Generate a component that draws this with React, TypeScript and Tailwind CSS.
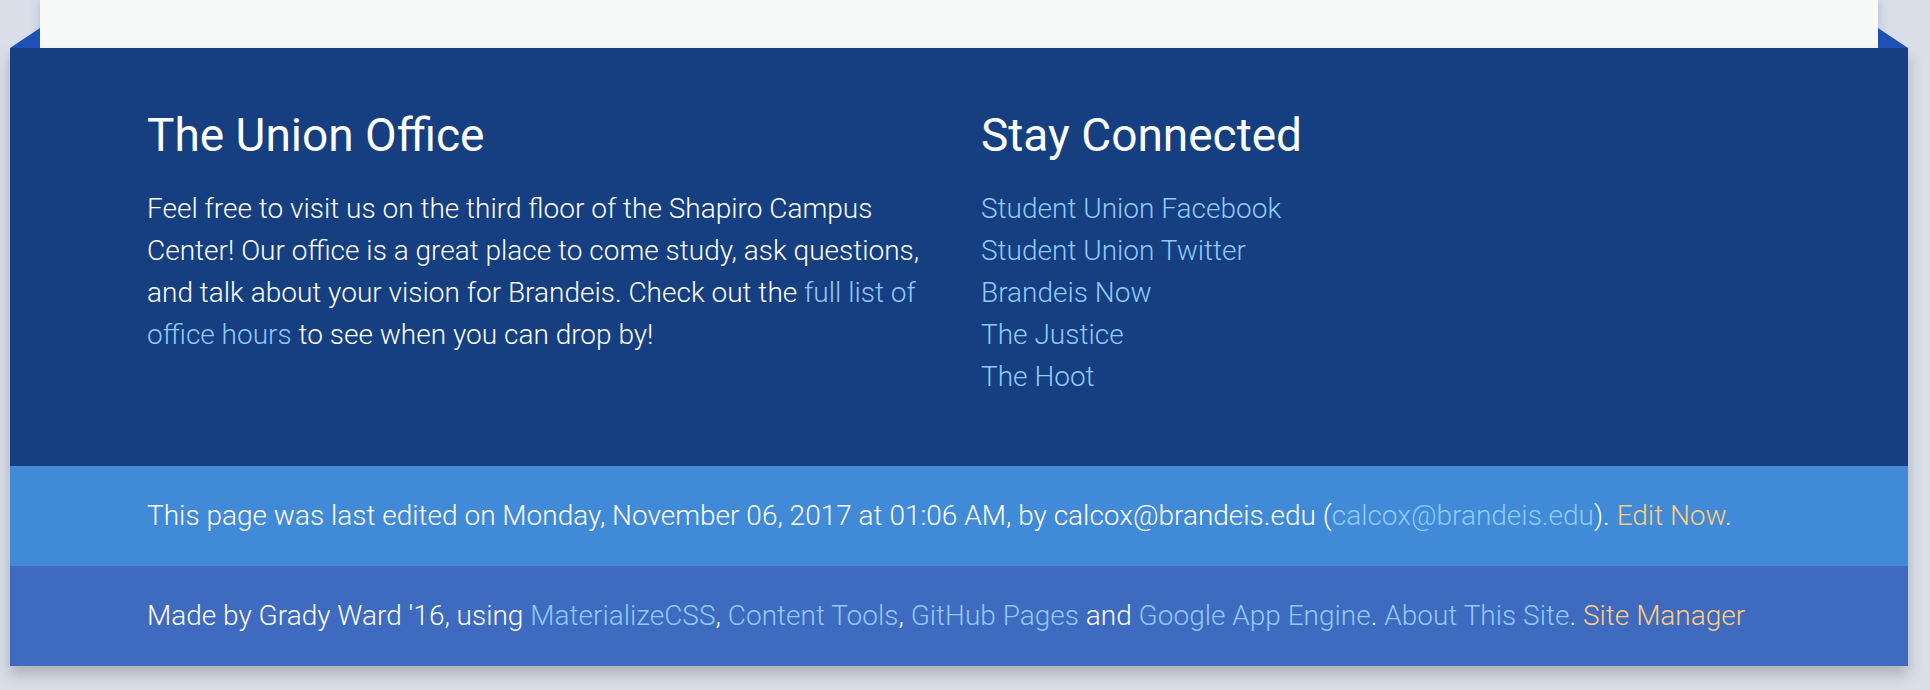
import React from "react";

const Link = ({ children }: { children: React.ReactNode }) => (
  <a className="text-[#90caf9] no-underline">{children}</a>
);
const Orange = ({ children }: { children: React.ReactNode }) => (
  <a className="text-[#ffcc80] no-underline">{children}</a>
);

export default function App() {
  return (
    <div
      className="w-[1930px] h-[690px] overflow-hidden bg-[#d9dee9]"
      style={{ fontFamily: "Roboto, 'Noto Sans', sans-serif" }}
    >
      <div className="ml-[40px] w-[1838px] h-[48px] bg-[#f7f8f8] shadow-[0_0_10px_rgba(0,0,0,0.18)]" />
      <footer className="relative ml-[10px] w-[1898px] shadow-[0_8px_14px_rgba(0,0,0,0.22)]">
        <svg
          className="absolute left-0 top-[-20px]"
          width="30"
          height="20"
          viewBox="0 0 30 20"
        >
          <polygon points="0,20 30,0 30,20" fill="#1e51b6" />
        </svg>
        <svg
          className="absolute right-0 top-[-20px]"
          width="30"
          height="20"
          viewBox="0 0 30 20"
        >
          <polygon points="0,0 30,20 0,20" fill="#1e51b6" />
        </svg>
        <div className="bg-[#153f81] h-[418px] px-[115px] pt-[59px]">
          <div className="grid grid-cols-2">
            <div className="px-[22px]">
              <h4 className="text-white text-[46px] leading-[56px] font-normal">
                The Union Office
              </h4>
              <p className="mt-[25px] text-white text-[28px] leading-[42px] font-light pr-[10px]">
                Feel free to visit us on the third floor of the Shapiro Campus
                Center! Our office is a great place to come study, ask
                questions, and talk about your vision for Brandeis. Check out
                the <Link>full list of office hours</Link> to see when you can
                drop by!
              </p>
            </div>
            <div className="px-[22px]">
              <h4 className="text-white text-[46px] leading-[56px] font-normal">
                Stay Connected
              </h4>
              <ul className="mt-[25px] text-[28px] leading-[42px] font-light flex flex-col">
                <li><Link>Student Union Facebook</Link></li>
                <li><Link>Student Union Twitter</Link></li>
                <li><Link>Brandeis Now</Link></li>
                <li><Link>The Justice</Link></li>
                <li><Link>The Hoot</Link></li>
              </ul>
            </div>
          </div>
        </div>
        <div className="bg-[#418ad7] h-[100px] flex items-center px-[137px]">
          <p className="text-white text-[28px] leading-[42px] font-light whitespace-nowrap">
            This page was last edited on Monday, November 06, 2017 at 01:06 AM,
            by calcox@brandeis.edu (<Link>calcox@brandeis.edu</Link>).{" "}
            <Orange>Edit Now</Orange>.
          </p>
        </div>
        <div className="bg-[#3e6abf] h-[100px] flex items-center px-[137px]">
          <p className="text-white text-[28px] leading-[42px] font-light whitespace-nowrap">
            Made by Grady Ward '16, using <Link>MaterializeCSS</Link>,{" "}
            <Link>Content Tools</Link>, <Link>GitHub Pages</Link> and{" "}
            <Link>Google App Engine</Link>. <Link>About This Site</Link>.{" "}
            <Orange>Site Manager</Orange>
          </p>
        </div>
      </footer>
    </div>
  );
}
